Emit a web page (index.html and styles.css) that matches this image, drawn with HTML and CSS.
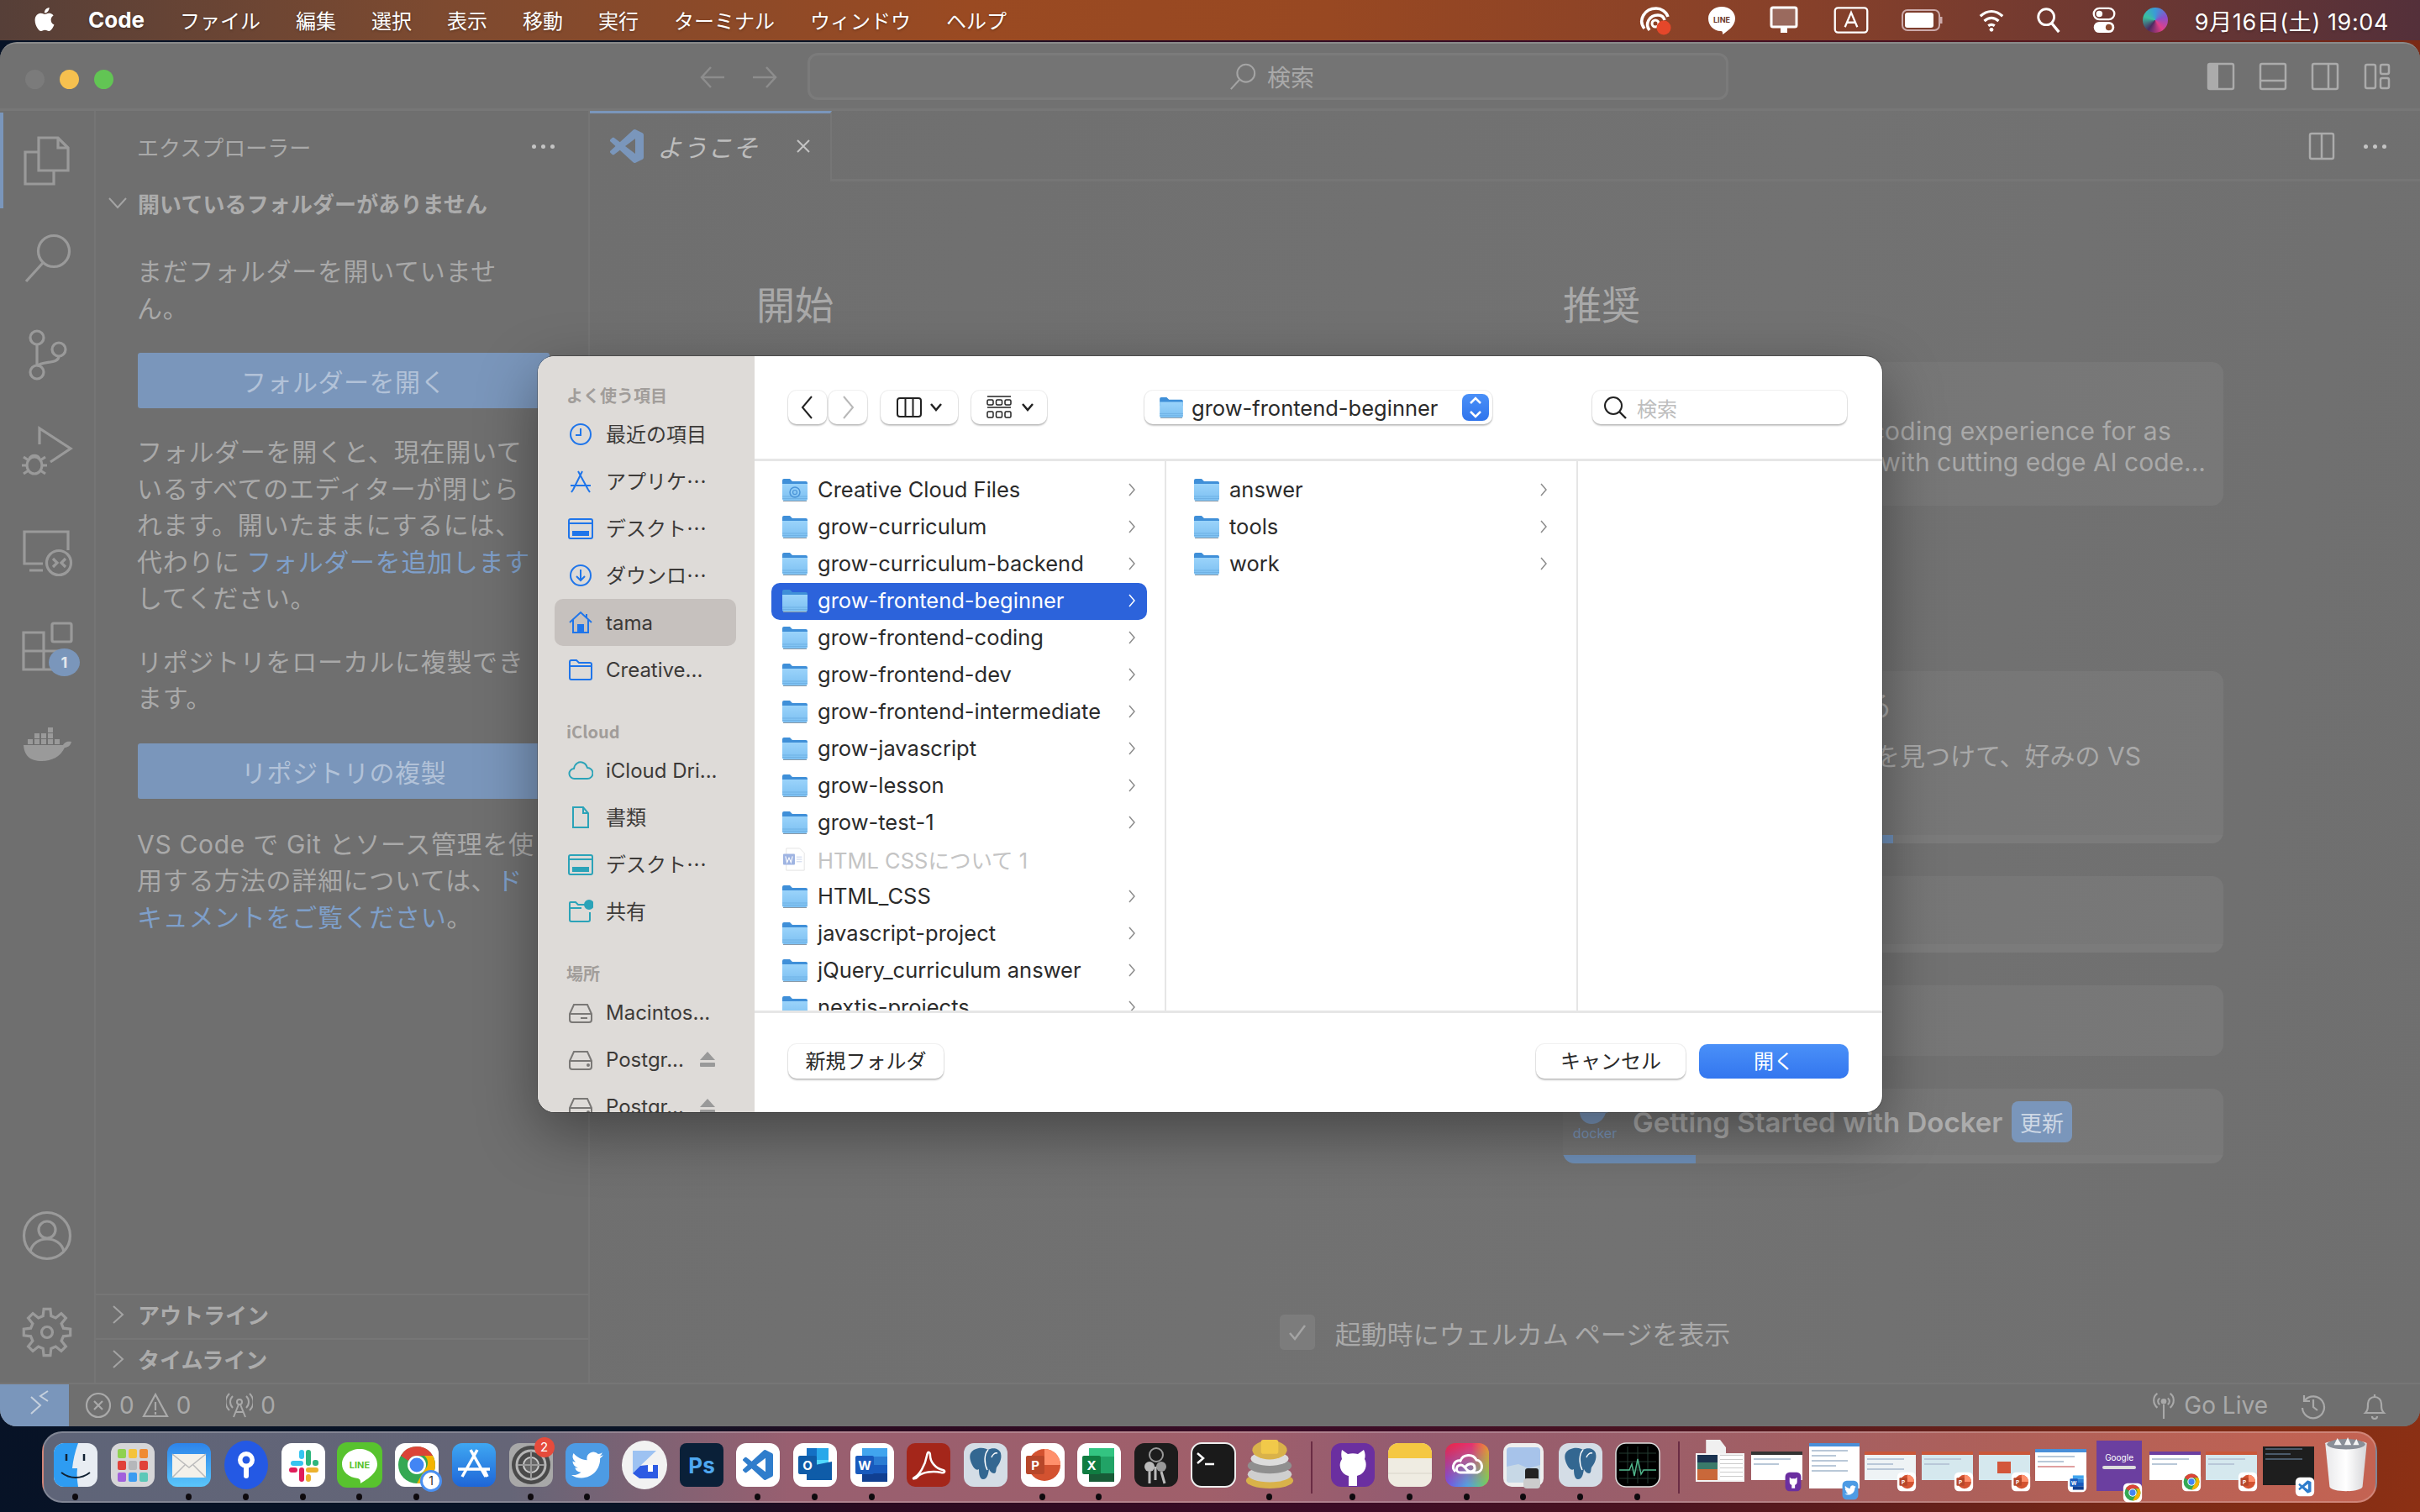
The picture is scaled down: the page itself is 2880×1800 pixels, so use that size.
FILE: index.html
```html
<!DOCTYPE html>
<html lang="ja">
<head>
<meta charset="utf-8">
<title>Code</title>
<link rel="stylesheet" href="styles.css">
</head>
<body>
<svg class="sprite" width="0" height="0">
  <defs>
    <linearGradient id="fold" x1="0" y1="0" x2="0" y2="1"><stop offset="0" stop-color="#9ad3fa"/><stop offset="1" stop-color="#7cc0f2"/></linearGradient>
    <symbol id="folder" viewBox="0 0 30 28">
      <path d="M0 3a2 2 0 0 1 2-2h7l3 3h16a2 2 0 0 1 2 2v6H0z" fill="#3f8fd8"/>
      <path d="M0 7h30v18a2 2 0 0 1-2 2H2a2 2 0 0 1-2-2z" fill="url(#fold)"/>
      <path d="M0 22h30M0 24.500h30" stroke="#6fb1e4" stroke-width="1"/>
      <path d="M1 27.500h28" stroke="#8a9aa8" stroke-width="1"/>
    </symbol>
    <symbol id="chev" viewBox="0 0 10 18"><path d="M2 2l6 7-6 7" fill="none" stroke="currentColor" stroke-width="1.500"/></symbol>
    <symbol id="vsc" viewBox="0 0 24 24"><path d="M23.15 2.587L18.21.21a1.494 1.494 0 0 0-1.705.29l-9.46 8.63-4.12-3.128a.999.999 0 0 0-1.276.057L.327 7.261A1 1 0 0 0 .326 8.74L3.899 12 .326 15.26a1 1 0 0 0 .001 1.479L1.65 17.94a.999.999 0 0 0 1.276.057l4.12-3.128 9.46 8.63a1.492 1.492 0 0 0 1.704.29l4.942-2.377A1.5 1.5 0 0 0 24 20.06V3.939a1.5 1.5 0 0 0-.85-1.352zm-5.146 14.861L10.826 12l7.178-5.448v10.896z" fill="currentColor"/></symbol>
    <symbol id="twbird" viewBox="0 0 24 24"><path d="M23.95 4.57a10 10 0 0 1-2.82.77 4.96 4.96 0 0 0 2.16-2.72c-.95.55-2 .96-3.12 1.19a4.92 4.92 0 0 0-8.38 4.48C7.69 8.1 4.07 6.13 1.64 3.16a4.92 4.92 0 0 0 1.52 6.57 4.9 4.9 0 0 1-2.23-.61v.06a4.92 4.92 0 0 0 3.95 4.83 4.9 4.9 0 0 1-2.21.08 4.93 4.93 0 0 0 4.6 3.42A9.87 9.87 0 0 1 0 19.54a13.94 13.94 0 0 0 7.55 2.21c9.06 0 14-7.5 14-13.98 0-.21 0-.42-.01-.63a10 10 0 0 0 2.41-2.57z" fill="#fff"/></symbol>
    <symbol id="d-vscode" viewBox="0 0 56 56"><rect x="2" y="2" width="52" height="52" rx="12" fill="#fff"/><use href="#vsc" x="10" y="10" width="36" height="36" color="#2f7dcc"/></symbol>
    <symbol id="d-chrome" viewBox="0 0 56 56"><rect x="2" y="2" width="52" height="52" rx="12" fill="#fff"/><circle cx="28" cy="28" r="22" fill="#34a853"/><path d="M28 6a22 22 0 0 1 19 11H28a11 11 0 0 0-10 6L9 17A22 22 0 0 1 28 6z" fill="#db4437"/><path d="M47 17a22 22 0 0 1-19 33l9-16a11 11 0 0 0 0-17z" fill="#f4b400"/><circle cx="28" cy="28" r="11" fill="#fff"/><circle cx="28" cy="28" r="8.500" fill="#4285f4"/></symbol>
    <symbol id="d-ppt" viewBox="0 0 56 56"><rect x="2" y="2" width="52" height="52" rx="12" fill="#fff"/><circle cx="30" cy="28" r="19" fill="#d35230"/><path d="M30 9a19 19 0 0 1 19 19H30z" fill="#ff8f6b"/><rect x="8" y="17" width="22" height="22" rx="2" fill="#b7472a"/><text x="19" y="34" class="tile">P</text></symbol>
    <symbol id="d-word" viewBox="0 0 56 56"><rect x="2" y="2" width="52" height="52" rx="12" fill="#fff"/><rect x="16" y="8" width="30" height="10" fill="#41a5ee"/><rect x="16" y="18" width="30" height="10" fill="#2b7cd3"/><rect x="16" y="28" width="30" height="10" fill="#185abd"/><rect x="16" y="38" width="30" height="10" fill="#103f91"/><rect x="8" y="17" width="22" height="22" rx="2" fill="#185abd"/><text x="19" y="34" class="tile">W</text></symbol>
    <symbol id="d-pg" viewBox="0 0 56 56"><rect x="2" y="2" width="52" height="52" rx="12" fill="#d4dde6"/><path d="M14 10c8-4 14-2 17 0 5-3 13-2 15 4 2 8-3 14-5 17-1 3 0 7-3 7s-5-3-6-5c-1 6-2 12-7 12-4 0-5-6-5-12-3 2-6-1-8-5-3-6-5-14 2-18z" fill="#336791"/><path d="M31 10c-5 5-5 16-1 24" fill="none" stroke="#fff" stroke-width="1.500"/><path d="M42 14c-3-1-6 2-7 5" fill="none" stroke="#fff" stroke-width="1.500"/></symbol>
  </defs>
</svg>

<header class="menubar">
  <svg class="apple" viewBox="0 0 24 24"><path fill="#fff" d="M12.152 6.896c-.948 0-2.415-1.078-3.96-1.04-2.04.027-3.91 1.183-4.961 3.014-2.117 3.675-.546 9.103 1.519 12.09 1.013 1.454 2.208 3.09 3.792 3.039 1.52-.065 2.09-.987 3.935-.987 1.831 0 2.35.987 3.96.948 1.637-.026 2.676-1.48 3.676-2.948 1.156-1.688 1.636-3.325 1.662-3.415-.039-.013-3.182-1.221-3.22-4.857-.026-3.04 2.48-4.494 2.597-4.559-1.429-2.09-3.623-2.324-4.39-2.376-2-.156-3.675 1.09-4.61 1.09zM15.53 3.83c.843-1.012 1.4-2.427 1.245-3.83-1.207.052-2.662.805-3.532 1.818-.78.896-1.454 2.338-1.273 3.714 1.338.104 2.715-.688 3.559-1.701"/></svg>
  <nav class="menus">
    <span class="appname">Code</span><span>ファイル</span><span>編集</span><span>選択</span><span>表示</span><span>移動</span><span>実行</span><span>ターミナル</span><span>ウィンドウ</span><span>ヘルプ</span>
  </nav>
  <div class="tray">
    <svg class="t t1" viewBox="0 0 42 36"><path d="M8 28C0 18 8 4 22 4c6 0 12 4 14 10" fill="none" stroke="#fff" stroke-width="3.500"/><path d="M14 30c-6-8 0-18 10-18 4 0 7 2 8 6" fill="none" stroke="#fff" stroke-width="3.500"/><circle cx="21" cy="22" r="4" fill="none" stroke="#fff" stroke-width="3"/><circle cx="31" cy="27" r="8.500" fill="#e5472a"/></svg>
    <svg class="t t2" viewBox="0 0 36 36"><path d="M18 2c9 0 16 6 16 14 0 9-9 15-15 19 0-3 0-4-2-4C8 31 2 24 2 16 2 8 9 2 18 2z" fill="#fff"/><text x="18" y="21" class="lineword">LINE</text></svg>
    <svg class="t t3" viewBox="0 0 36 36"><rect x="3" y="3" width="30" height="23" rx="2" fill="#9a6a5e" stroke="#fff" stroke-width="3"/><rect x="14" y="26" width="8" height="7" fill="#fff"/></svg>
    <svg class="t t4" viewBox="0 0 48 36"><rect x="3" y="2" width="42" height="32" rx="4" fill="none" stroke="#fff" stroke-width="2.500"/><path d="M16 27l8-19 8 19M19 21h10" fill="none" stroke="#fff" stroke-width="2.500"/></svg>
    <svg class="t t5" viewBox="0 0 52 36"><rect x="2" y="6" width="44" height="24" rx="6" fill="none" stroke="#caa" stroke-width="2"/><rect x="5" y="9" width="34" height="18" rx="3" fill="#fff"/><path d="M48 14v8" stroke="#caa" stroke-width="3"/></svg>
    <svg class="t t6" viewBox="0 0 36 36"><path d="M4 13c9-8 19-8 28 0M9 19c6-5 12-5 18 0M14 25c3-2 5-2 8 0" fill="none" stroke="#fff" stroke-width="3.500"/><circle cx="18" cy="30" r="2.500" fill="#fff"/></svg>
    <svg class="t t7" viewBox="0 0 36 36"><circle cx="15" cy="14" r="10" fill="none" stroke="#fff" stroke-width="3"/><path d="M22 22l9 11" stroke="#fff" stroke-width="3.500"/></svg>
    <svg class="t t8" viewBox="0 0 36 36"><rect x="5" y="3" width="26" height="14" rx="7" fill="none" stroke="#fff" stroke-width="2.500"/><circle cx="12" cy="10" r="4" fill="#fff"/><rect x="5" y="20" width="26" height="14" rx="7" fill="#fff"/><circle cx="24" cy="27" r="4" fill="#8a4a30"/></svg>
    <span class="t siri"></span>
    <span class="clock">9月16日(土) 19:04</span>
  </div>
</header>

<section class="window">
  <div class="titlebar">
    <div class="lights"><i class="l off"></i><i class="l yel"></i><i class="l grn"></i></div>
    <div class="arrows">
      <svg viewBox="0 0 32 32"><path d="M30 16H3M14 4L3 16l11 12" fill="none" stroke="#8d8d8d" stroke-width="2.500"/></svg>
      <svg viewBox="0 0 32 32"><path d="M2 16h27M18 4l11 12-11 12" fill="none" stroke="#8d8d8d" stroke-width="2.500"/></svg>
    </div>
    <div class="cmd">
      <svg viewBox="0 0 36 36"><circle cx="22" cy="14" r="11" fill="none" stroke="#a4a4a4" stroke-width="2.200"/><path d="M14 22L3 34" stroke="#a4a4a4" stroke-width="2.200"/></svg>
      <span>検索</span>
    </div>
    <div class="layouts">
      <svg viewBox="0 0 34 34"><rect x="2" y="2" width="30" height="30" rx="2" fill="none" stroke="#ababab" stroke-width="2.500"/><rect x="2" y="2" width="12" height="30" fill="#ababab"/></svg>
      <svg viewBox="0 0 34 34"><rect x="2" y="2" width="30" height="30" rx="2" fill="none" stroke="#ababab" stroke-width="2.500"/><path d="M2 22h30" stroke="#ababab" stroke-width="2.500"/></svg>
      <svg viewBox="0 0 34 34"><rect x="2" y="2" width="30" height="30" rx="2" fill="none" stroke="#ababab" stroke-width="2.500"/><path d="M21 2v30" stroke="#ababab" stroke-width="2.500"/></svg>
      <svg viewBox="0 0 34 34"><rect x="3" y="3" width="12" height="28" rx="2" fill="none" stroke="#ababab" stroke-width="2.500"/><rect x="21" y="3" width="10" height="11" rx="2" fill="none" stroke="#ababab" stroke-width="2.500"/><rect x="21" y="19" width="10" height="12" rx="2" fill="none" stroke="#ababab" stroke-width="2.500"/></svg>
    </div>
  </div>

  <div class="main">
    <aside class="activity">
      <div class="act act-on"><svg viewBox="0 0 70 70" class="ai"><path d="M25 46V7h23l12 12v27zM48 7v12h12"/><path d="M25 24H9v38h34V46"/></svg></div>
      <div class="act"><svg viewBox="0 0 70 70" class="ai"><circle cx="43" cy="27" r="18.500"/><path d="M30 41L10 63"/></svg></div>
      <div class="act"><svg viewBox="0 0 70 70" class="ai"><circle cx="23" cy="15" r="8"/><circle cx="49" cy="29" r="8"/><circle cx="23" cy="56" r="8"/><path d="M23 23v25M49 37c0 10-20 5-26 12"/></svg></div>
      <div class="act"><svg viewBox="0 0 70 70" class="ai"><path d="M26 27V8l37 24-24 16"/><ellipse cx="20" cy="52" rx="9" ry="10"/><path d="M7 42l6 4M7 62l6-4M33 42l-6 4M33 62l-6-4M5 52h6M29 52h6M14 44c2-5 10-5 12 0"/></svg></div>
      <div class="act"><svg viewBox="0 0 70 70" class="ai"><path d="M30 54H8V16h52v22M14 62h16"/><circle cx="49" cy="53" r="14.500"/><path d="M42 48l5 5-5 5M57 48l-5 5 5 5"/></svg></div>
      <div class="act"><svg viewBox="0 0 70 70" class="ai"><rect x="41" y="10" width="23" height="22" rx="2"/><path d="M7 21h24v44H7zM7 43h42v22H31"/></svg><b class="badge">1</b></div>
      <div class="act"><svg viewBox="0 0 70 70" class="af"><path d="M7 40h47c2-3 4-5 10-4-1 5-5 7-8 7-5 11-16 16-27 16C14 59 8 52 7 40z"/><path d="M12 33h6v6h-6zM20 33h6v6h-6zM28 33h6v6h-6zM36 33h6v6h-6zM20 26h6v6h-6zM28 26h6v6h-6zM36 26h6v6h-6zM36 19h6v6h-6zM44 33h6v6h-6z"/></svg></div>
      <div class="act-bottom">
        <div class="act"><svg viewBox="0 0 70 70" class="ai"><circle cx="35" cy="35" r="27.500"/><circle cx="35" cy="28" r="10"/><path d="M15 54c4-20 36-20 40 0"/></svg></div>
        <div class="act"><svg viewBox="0 0 70 70" class="ai"><circle cx="35" cy="35" r="6.500"/><path d="M30.200 15.600L31.100 7.300H38.900L39.800 15.600L45.300 17.900L51.900 12.600L57.400 18.100L52.100 24.700L54.400 30.200L62.700 31.100V38.900L54.400 39.800L52.100 45.300L57.400 51.900L51.900 57.400L45.300 52.100L39.800 54.400L38.900 62.700H31.100L30.200 54.400L24.700 52.100L18.100 57.400L12.600 51.900L17.900 45.300L15.600 39.800L7.300 38.900V31.100L15.600 30.200L17.900 24.700L12.600 18.100L18.100 12.600L24.700 17.900z"/></svg></div>
      </div>
    </aside>

    <aside class="side">
      <div class="side-head"><span>エクスプローラー</span><span class="dots"><i></i><i></i><i></i></span></div>
      <div class="pane-head"><svg class="tw" viewBox="0 0 24 24"><path d="M2 7l10 11L22 7"/></svg><span>開いているフォルダーがありません</span></div>
      <div class="side-body">
        <p>まだフォルダーを開いていませ<br>ん。</p>
        <button class="vbtn">フォルダーを開く</button>
        <p>フォルダーを開くと、現在開いて<br>いるすべてのエディターが閉じら<br>れます。開いたままにするには、<br>代わりに <a>フォルダーを追加します</a><br>してください。</p>
        <p class="gap2">リポジトリをローカルに複製でき<br>ます。</p>
        <button class="vbtn">リポジトリの複製</button>
        <p class="gap3">VS Code で Git とソース管理を使<br>用する方法の詳細については、<a>ド</a><br><a>キュメントをご覧ください</a>。</p>
      </div>
      <div class="pane-foot"><svg class="tw" viewBox="0 0 24 24"><path d="M7 2l11 10L7 22"/></svg><span>アウトライン</span></div>
      <div class="pane-foot"><svg class="tw" viewBox="0 0 24 24"><path d="M7 2l11 10L7 22"/></svg><span>タイムライン</span></div>
    </aside>

    <main class="editor">
      <div class="tabs">
        <div class="tab">
          <svg class="tabicon" viewBox="0 0 24 24"><use href="#vsc" color="#7a96bb"/></svg>
          <span class="tabname">ようこそ</span>
          <svg class="tabx" viewBox="0 0 20 20"><path d="M3 3l14 14M17 3L3 17" stroke="#c4c4c4" stroke-width="2"/></svg>
        </div>
        <div class="tabfill">
          <svg viewBox="0 0 34 34"><rect x="3" y="2" width="28" height="30" rx="2" fill="none" stroke="#ababab" stroke-width="2.500"/><path d="M17 2v30" stroke="#ababab" stroke-width="2.500"/></svg>
          <span class="dots"><i></i><i></i><i></i></span>
        </div>
      </div>
      <div class="welcome">
        <div class="wleft"><h2>開始</h2></div>
        <div class="wright">
          <h2>推奨</h2>
          <div class="card c1">
            <div class="rline r62">Supercharge your coding experience for as</div>
            <div class="rline r21">little as $10/month with cutting edge AI code...</div>
          </div>
          <div class="card c2">
            <div class="c2body">
              <div class="rline r394 ctitle">好みの外観を見つける</div>
              <div class="rline r98">お気に入りのテーマを見つけて、好みの VS</div>
              <div class="rline r392">Code にしましょう。</div>
            </div>
            <div class="prog"><div class="progv" style="width:50%"></div></div>
          </div>
          <div class="card c3"><div class="c2body"></div><div class="prog"></div></div>
          <div class="card c4"></div>
          <div class="card c5">
            <div class="c5body">
              <div class="dk">
                <svg viewBox="0 0 48 28"><path d="M4 10h32c2-3 4-4 8-3-1 4-4 5-6 5-3 9-10 14-18 14C11 26 5 20 4 10z" fill="#7a96bb"/></svg>
                <span>docker</span>
              </div>
              <span class="dtitle">Getting Started with Docker</span>
              <span class="upd">更新</span>
            </div>
            <div class="prog"><div class="progv" style="width:20.100%"></div></div>
          </div>
        </div>
      </div>
      <div class="showstart">
        <span class="cb"><svg viewBox="0 0 28 28"><path d="M5 15l6 7L23 6" fill="none" stroke="#a4a4a4" stroke-width="2.500"/></svg></span>
        <span>起動時にウェルカム ページを表示</span>
      </div>
    </main>
  </div>

  <footer class="status">
    <div class="remote"><svg viewBox="0 0 28 36"><path d="M3 8l11 10L3 28M23 1l-9 6 9 6" fill="none" stroke="#c5d0dd" stroke-width="2"/></svg></div>
    <div class="st-left">
      <svg class="s-err" viewBox="0 0 32 32"><circle cx="16" cy="16" r="14" fill="none" stroke="#a9a9a9" stroke-width="2.200"/><path d="M11 11l10 10M21 11L11 21" stroke="#a9a9a9" stroke-width="2.200"/></svg><span>0</span>
      <svg class="s-warn" viewBox="0 0 32 32"><path d="M16 3L30 29H2z" fill="none" stroke="#a9a9a9" stroke-width="2.200"/><path d="M16 12v10M16 24v3" stroke="#a9a9a9" stroke-width="2.200"/></svg><span>0</span>
      <svg class="s-radio" viewBox="0 0 32 32"><circle cx="16" cy="12" r="3" fill="none" stroke="#a9a9a9" stroke-width="2"/><path d="M15 15L9 30M17 15l6 15M11 24h10M8 5c-4 4-4 10 0 14M24 5c4 4 4 10 0 14M4 2c-6 6-6 14 0 20M28 2c6 6 6 14 0 20" fill="none" stroke="#a9a9a9" stroke-width="2"/></svg><span>0</span>
    </div>
    <div class="st-right">
      <svg class="s-live" viewBox="0 0 32 36"><circle cx="16" cy="13" r="3.500" fill="#a9a9a9"/><path d="M8 21c-6-5-6-14 0-18M24 21c6-5 6-14 0-18M11 17c-3-2-3-6 0-8M21 17c3-2 3-6 0-8M16 17v18" fill="none" stroke="#a9a9a9" stroke-width="2.200"/></svg>
      <span class="golive">Go Live</span>
      <svg class="s-hist" viewBox="0 0 32 32"><path d="M5 4v7h7M6 10a13 13 0 1 1-3 9" fill="none" stroke="#a9a9a9" stroke-width="2.200"/><path d="M16 9v9l5 4" fill="none" stroke="#a9a9a9" stroke-width="2.200"/></svg>
      <svg class="s-bell" viewBox="0 0 32 32"><path d="M5 25c3-3 3-6 3-11a8 8 0 0 1 16 0c0 5 0 8 3 11zM13 29a3 3 0 0 0 6 0M16 3v3" fill="none" stroke="#a9a9a9" stroke-width="2.200"/></svg>
    </div>
  </footer>
</section>

<div class="dock">
  <div class="slot run"><svg class="ic" viewBox="0 0 56 56"><rect x="2" y="2" width="52" height="52" rx="12" fill="#e8edf3"/><path d="M14 2h17c-4 11-6 20-7 30h6c-1 8 0 15 1 22H14A12 12 0 0 1 2 42V14A12 12 0 0 1 14 2z" fill="#2e9cf2"/><path d="M17 15v8M38 15v8" stroke="#123" stroke-width="2.500"/><path d="M11 37c10 8 24 8 34 0" fill="none" stroke="#123" stroke-width="2"/></svg></div>
  <div class="slot"><svg class="ic" viewBox="0 0 56 56"><rect x="2" y="2" width="52" height="52" rx="12" fill="#d6d6d8"/><rect x="10" y="9" width="10" height="11" rx="2" fill="#8fd14f"/><rect x="23" y="9" width="10" height="11" rx="2" fill="#f5c33b"/><rect x="36" y="9" width="10" height="11" rx="2" fill="#f08b32"/><rect x="10" y="23" width="10" height="11" rx="2" fill="#e0423a"/><rect x="23" y="23" width="10" height="11" rx="2" fill="#b5b7ba"/><rect x="36" y="23" width="10" height="11" rx="2" fill="#e0423a"/><rect x="10" y="37" width="10" height="11" rx="2" fill="#a160dc"/><rect x="23" y="37" width="10" height="11" rx="2" fill="#3c9cf0"/><rect x="36" y="37" width="10" height="11" rx="2" fill="#5cc8b8"/></svg></div>
  <div class="slot run"><svg class="ic" viewBox="0 0 56 56"><defs><linearGradient id="mg" x1="0" y1="0" x2="0" y2="1"><stop offset="0" stop-color="#2d84ea"/><stop offset="1" stop-color="#5ac6fb"/></linearGradient></defs><rect x="2" y="2" width="52" height="52" rx="12" fill="url(#mg)"/><rect x="8" y="15" width="40" height="28" rx="2" fill="#f4f1ea"/><path d="M8 15l20 16 20-16M8 43l15-15M48 43L33 28" fill="none" stroke="#bbb" stroke-width="1.500"/></svg></div>
  <div class="slot run"><svg class="ic tall" viewBox="0 0 56 60"><ellipse cx="28" cy="30" rx="26" ry="29" fill="#2459e4"/><circle cx="28" cy="24" r="10" fill="#fff"/><circle cx="28" cy="24" r="4.500" fill="#2459e4"/><rect x="25" y="30" width="6" height="16" rx="3" fill="#fff"/></svg></div>
  <div class="slot run"><svg class="ic" viewBox="0 0 56 56"><rect x="2" y="2" width="52" height="52" rx="12" fill="#fff"/><rect x="14" y="23" width="15" height="6" rx="3" fill="#36c5f0" transform="translate(-1 0)"/><rect x="23" y="10" width="6" height="11" rx="3" fill="#36c5f0"/><rect x="31" y="10" width="6" height="19" rx="3" fill="#2eb67d"/><rect x="39" y="22" width="7" height="7" rx="3" fill="#2eb67d"/><rect x="31" y="31" width="15" height="6" rx="3" fill="#ecb22e"/><rect x="31" y="39" width="6" height="9" rx="3" fill="#ecb22e"/><rect x="23" y="31" width="6" height="17" rx="3" fill="#e01e5a"/><rect x="11" y="31" width="10" height="6" rx="3" fill="#e01e5a"/></svg></div>
  <div class="slot run"><svg class="ic" viewBox="0 0 56 56"><rect x="1" y="1" width="54" height="54" rx="12" fill="#58c32e"/><path d="M28 9c12 0 21 8 21 18 0 11-12 18-20 23 0-3 0-5-3-6C15 43 7 36 7 27 7 17 16 9 28 9z" fill="#fff"/><text x="28" y="32" class="linegreen">LINE</text></svg></div>
  <div class="slot run"><svg class="ic" viewBox="0 0 56 56"><use href="#d-chrome"/></svg><b class="dot-badge">1</b></div>
  <div class="slot"><svg class="ic" viewBox="0 0 56 56"><defs><linearGradient id="as" x1="0" y1="0" x2="0" y2="1"><stop offset="0" stop-color="#3fa7f2"/><stop offset="1" stop-color="#1e66d8"/></linearGradient></defs><rect x="2" y="2" width="52" height="52" rx="12" fill="url(#as)"/><path d="M24 10l18 32M32 10L14 42M9 33h38M40 33l4 9" fill="none" stroke="#fff" stroke-width="3.500"/></svg></div>
  <div class="slot run"><svg class="ic" viewBox="0 0 56 56"><rect x="2" y="2" width="52" height="52" rx="12" fill="#a8a8a8"/><circle cx="28" cy="28" r="23" fill="#4a4a4a"/><circle cx="28" cy="28" r="17" fill="none" stroke="#b5b5b5" stroke-width="3"/><circle cx="28" cy="28" r="9" fill="#666" stroke="#ccc" stroke-width="2"/><path d="M28 11v34M12 28h32" stroke="#999" stroke-width="2"/></svg><b class="red-badge">2</b></div>
  <div class="slot run"><svg class="ic" viewBox="0 0 56 56"><rect x="2" y="2" width="52" height="52" rx="12" fill="#4d9be4"/><use href="#twbird" x="9" y="9" width="38" height="38"/></svg></div>
  <div class="slot"><svg class="ic tall" viewBox="0 0 56 60"><ellipse cx="28" cy="30" rx="27" ry="29" fill="#f2f2f2"/><path d="M14 13h28L23 31l-9 9z" fill="#9dc2f2"/><path d="M14 40l9-9 9-1h12v16H22z" fill="#2d5be3"/><path d="M32 30h6v8h-6z" fill="#fff"/></svg></div>
  <div class="slot"><svg class="ic" viewBox="0 0 56 56"><rect x="2" y="2" width="52" height="52" rx="8" fill="#0a2038"/><text x="28" y="38" class="pstext">Ps</text></svg></div>
  <div class="slot run"><svg class="ic" viewBox="0 0 56 56"><use href="#d-vscode"/></svg></div>
  <div class="slot run"><svg class="ic" viewBox="0 0 56 56"><rect x="2" y="2" width="52" height="52" rx="12" fill="#fff"/><rect x="18" y="8" width="24" height="36" fill="#1470c4"/><rect x="30" y="8" width="14" height="14" fill="#28a8ea"/><rect x="30" y="22" width="14" height="12" fill="#50d9ff"/><path d="M18 30l30-6v22H18z" fill="#0f5ca8"/><rect x="8" y="17" width="22" height="22" rx="2" fill="#0f5ca8"/><text x="19" y="34" class="tile">O</text></svg></div>
  <div class="slot run"><svg class="ic" viewBox="0 0 56 56"><use href="#d-word"/></svg></div>
  <div class="slot"><svg class="ic" viewBox="0 0 56 56"><rect x="2" y="2" width="52" height="52" rx="10" fill="#a4261a"/><path d="M11 43c6-3 13-14 15-26 1-6 4-5 4 0 0 7 6 15 15 17 4 1 2 4-2 3-9-2-23-1-28 5-3 3-7 3-4 1z" fill="none" stroke="#fff" stroke-width="2.500"/></svg></div>
  <div class="slot"><svg class="ic" viewBox="0 0 56 56"><use href="#d-pg"/></svg></div>
  <div class="slot run"><svg class="ic" viewBox="0 0 56 56"><use href="#d-ppt"/></svg></div>
  <div class="slot run"><svg class="ic" viewBox="0 0 56 56"><rect x="2" y="2" width="52" height="52" rx="12" fill="#fff"/><rect x="16" y="8" width="30" height="20" fill="#33c481"/><rect x="16" y="28" width="30" height="20" fill="#185c37"/><rect x="30" y="18" width="16" height="20" fill="#21a366"/><rect x="8" y="17" width="22" height="22" rx="2" fill="#107c41"/><text x="19" y="34" class="tile">X</text></svg></div>
  <div class="slot"><svg class="ic" viewBox="0 0 56 56"><rect x="2" y="2" width="52" height="52" rx="12" fill="#1c1c1c"/><circle cx="28" cy="16" r="8" fill="none" stroke="#999" stroke-width="2"/><circle cx="20" cy="30" r="6" fill="#bbb"/><circle cx="34" cy="30" r="6" fill="#999"/><path d="M20 36v14M34 36l4 14M27 30v16" stroke="#bbb" stroke-width="3"/></svg></div>
  <div class="slot"><svg class="ic" viewBox="0 0 56 56"><rect x="2" y="2" width="52" height="52" rx="12" fill="#1a1a1a" stroke="#eee" stroke-width="2"/><path d="M9 14l7 6-7 6M18 27h11" fill="none" stroke="#fff" stroke-width="2.500"/></svg></div>
  <div class="slot run"><svg class="ic xtall" viewBox="0 0 64 66"><ellipse cx="32" cy="54" rx="30" ry="10" fill="#d9b24a"/><ellipse cx="32" cy="46" rx="28" ry="10" fill="#cfcfcf"/><ellipse cx="32" cy="35" rx="28" ry="10" fill="#8f8f8f"/><ellipse cx="32" cy="26" rx="24" ry="9" fill="#dcdcdc"/><ellipse cx="32" cy="15" rx="22" ry="12" fill="#d9b24a"/><rect x="21" y="2" width="22" height="18" rx="3" fill="#f1c94a"/></svg></div>
  <div class="dsep"><i></i></div>
  <div class="slot run"><svg class="ic" viewBox="0 0 56 56"><rect x="2" y="2" width="52" height="52" rx="12" fill="#6b2fa0"/><path d="M15 10l7 5c4-1 8-1 12 0l7-5c2 4 2 8 1 11 3 5 2 13-3 17-2 2-5 2-6 3v12H23V41c-5-1-9-5-10-10-1-4 0-7 2-10-1-4-1-7 0-11z" fill="#fff"/></svg></div>
  <div class="slot run"><svg class="ic" viewBox="0 0 56 56"><rect x="2" y="2" width="52" height="52" rx="12" fill="#efece2"/><path d="M2 20V14A12 12 0 0 1 14 2h28a12 12 0 0 1 12 12v6z" fill="#f5c842"/><path d="M2 38h52" stroke="#d8d4c8" stroke-width="1"/></svg></div>
  <div class="slot run"><svg class="ic" viewBox="0 0 56 56"><defs><linearGradient id="ccg" x1="0" y1="0" x2="1" y2="0"><stop offset="0" stop-color="#f0243c"/><stop offset=".6" stop-color="#ee2a6a"/><stop offset="1" stop-color="#f89030"/></linearGradient><linearGradient id="ccb" x1="0" y1="0" x2="1" y2="0"><stop offset="0" stop-color="#6a52f0"/><stop offset=".5" stop-color="#4aa8e8"/><stop offset="1" stop-color="#68d858"/></linearGradient><linearGradient id="ccf" x1="0" y1="0" x2="0" y2="1"><stop offset="0" stop-color="#fff" stop-opacity="0"/><stop offset="1" stop-color="#fff"/></linearGradient><mask id="ccm"><rect x="0" y="0" width="56" height="56" fill="url(#ccf)"/></mask></defs><rect x="2" y="2" width="52" height="52" rx="12" fill="url(#ccg)"/><rect x="2" y="2" width="52" height="52" rx="12" fill="url(#ccb)" mask="url(#ccm)"/><path d="M14 36c-6-6 0-15 6-13 3-8 15-9 19-1 8 1 9 13 1 15H20c-6 0-6-8 0-9 3-1 5 3 8 6 4 4 10 1 9-3 0-5-7-6-11-1" fill="none" stroke="#fff" stroke-width="3"/></svg></div>
  <div class="slot run"><svg class="ic" viewBox="0 0 56 56"><rect x="4" y="2" width="48" height="52" rx="10" fill="#eee"/><rect x="8" y="7" width="40" height="42" rx="4" fill="#a7c3ea"/><path d="M8 30l14-3 12 5 14-4v17a4 4 0 0 1-4 4H12a4 4 0 0 1-4-4z" fill="#c7d8e6"/><rect x="30" y="32" width="16" height="22" rx="3" fill="#222"/><rect x="28" y="44" width="20" height="12" rx="4" fill="#ccc"/></svg></div>
  <div class="slot run"><svg class="ic" viewBox="0 0 56 56"><use href="#d-pg"/></svg></div>
  <div class="slot run"><svg class="ic" viewBox="0 0 56 56"><rect x="2" y="2" width="52" height="52" rx="12" fill="#000" stroke="#ddd" stroke-width="1.500"/><path d="M6 14h44M6 24h44M6 34h44M6 44h44M16 6v44M28 6v44M40 6v44" stroke="#223a30" stroke-width="1"/><path d="M6 34h12l3-7 3 14 4-20 4 18 3-5h15" fill="none" stroke="#4fb58a" stroke-width="1.500"/></svg></div>
  <div class="dsep"><i></i></div>
  <div class="slot stk">
    <div class="thumb th-doc"><i class="doc-top"></i><div class="doc-body"><i class="dc1"></i><i class="dc2"></i></div></div>
  </div>
  <div class="slot stk"><div class="thumb th-a"><i class="bar-dk"></i><i class="ln"></i><i class="ln s"></i><svg class="mini" viewBox="0 0 56 56"><rect x="6" y="2" width="44" height="52" rx="12" fill="#6b2fa0"/><path d="M18 16l6 4c3-1 6-1 9 0l6-4v12c0 6-4 8-6 9v9h-9v-9c-3-1-6-3-6-9z" fill="#fff"/></svg></div></div>
  <div class="slot stk"><div class="thumb th-b"><i class="bar-bl"></i><i class="ln"></i><i class="ln s"></i><i class="ln"></i><i class="ln s"></i><i class="ln"></i><svg class="mini" viewBox="0 0 56 56"><rect x="6" y="2" width="44" height="52" rx="12" fill="#4d9be4"/><use href="#twbird" x="12" y="12" width="32" height="32"/></svg></div></div>
  <div class="slot stk"><div class="thumb th-p"><i class="bar-or"></i><i class="ln"></i><i class="ln s"></i><i class="ln"></i><svg class="mini" viewBox="0 0 56 56"><use href="#d-ppt"/></svg></div></div>
  <div class="slot stk"><div class="thumb th-p blue"><i class="bar-or"></i><i class="ln"></i><i class="ln s"></i><svg class="mini" viewBox="0 0 56 56"><use href="#d-ppt"/></svg></div></div>
  <div class="slot stk"><div class="thumb th-p blue"><i class="bar-or"></i><i class="spot"></i><svg class="mini" viewBox="0 0 56 56"><use href="#d-ppt"/></svg></div></div>
  <div class="slot stk"><div class="thumb th-w"><i class="bar-bl"></i><i class="ln"></i><i class="ln s"></i><i class="ln red"></i><svg class="mini" viewBox="0 0 56 56"><use href="#d-word"/></svg></div></div>
  <div class="slot stk"><div class="thumb th-g"><span>Google</span><i class="srch"></i><svg class="mini" viewBox="0 0 56 56"><use href="#d-chrome"/></svg></div></div>
  <div class="slot stk"><div class="thumb th-a"><i class="bar-pu"></i><i class="ln"></i><i class="ln s"></i><svg class="mini" viewBox="0 0 56 56"><use href="#d-chrome"/></svg></div></div>
  <div class="slot stk"><div class="thumb th-p blue"><i class="bar-or"></i><i class="ln"></i><i class="ln s"></i><svg class="mini" viewBox="0 0 56 56"><use href="#d-ppt"/></svg></div></div>
  <div class="slot stk"><div class="thumb th-d"><i class="ln"></i><i class="ln s"></i><i class="ln"></i><svg class="mini" viewBox="0 0 56 56"><use href="#d-vscode"/></svg></div></div>
  <div class="slot"><svg class="ic xtall" viewBox="0 0 56 64"><defs><linearGradient id="tr" x1="0" y1="0" x2="1" y2="0"><stop offset="0" stop-color="#e8e8ea"/><stop offset=".5" stop-color="#fff"/><stop offset="1" stop-color="#d5d5d8"/></linearGradient></defs><path d="M4 8c0-4 48-4 48 0l-5 50c-1 7-37 7-38 0z" fill="url(#tr)"/><ellipse cx="28" cy="9" rx="22" ry="6" fill="#8a8f98"/><path d="M14 10l4-8 5 8M26 10l4-9 4 9M36 10l4-7 3 7" fill="#f4f4f4"/></svg></div>
</div>

<section class="dialog">
  <div class="d-side">
    <h4 class="first">よく使う項目</h4>
    <div class="d-item"><svg viewBox="0 0 30 30"><circle cx="15" cy="15" r="12"/><path d="M15 8v8H9"/></svg><span class="jp">最近の項目</span></div>
    <div class="d-item"><svg viewBox="0 0 30 30"><path d="M12 3l12 22M17 3L6 25M3 20h24M6 25l-2 3M24 25l2 3"/></svg><span class="jp">アプリケ…</span></div>
    <div class="d-item"><svg viewBox="0 0 30 30"><rect x="1" y="4" width="28" height="23" rx="2"/><path d="M1 9h28"/><rect x="6" y="19" width="18" height="4" fill="currentColor"/></svg><span class="jp">デスクト…</span></div>
    <div class="d-item"><svg viewBox="0 0 30 30"><circle cx="15" cy="15" r="12"/><path d="M15 8v13M10 16l5 5 5-5"/></svg><span class="jp">ダウンロ…</span></div>
    <div class="d-item sel"><svg viewBox="0 0 30 30"><path d="M2 15L15 3l13 12M6 12v15h18V12M22 5v5"/><rect x="12" y="18" width="6" height="9" fill="currentColor"/></svg><span>tama</span></div>
    <div class="d-item"><svg viewBox="0 0 30 30"><path d="M2 6a2 2 0 0 1 2-2h6l3 3h13a2 2 0 0 1 2 2v16a2 2 0 0 1-2 2H4a2 2 0 0 1-2-2zM2 11h26"/></svg><span>Creative...</span></div>
    <h4>iCloud</h4>
    <div class="d-item teal"><svg viewBox="0 0 30 30"><path d="M8 25a6 6 0 0 1-1-12c1-6 6-9 11-7 3 1 4 3 5 6a6 6 0 0 1 0 13z"/></svg><span>iCloud Dri...</span></div>
    <div class="d-item teal"><svg viewBox="0 0 30 30"><path d="M6 3h12l6 7v17H6zM18 3v7h6"/></svg><span class="jp">書類</span></div>
    <div class="d-item teal"><svg viewBox="0 0 30 30"><rect x="1" y="4" width="28" height="23" rx="2"/><path d="M1 9h28"/><rect x="6" y="19" width="18" height="4" fill="currentColor"/></svg><span class="jp">デスクト…</span></div>
    <div class="d-item teal"><svg viewBox="0 0 30 30"><path d="M20 7h-8L9 4H3a1 1 0 0 0-1 1v20a2 2 0 0 0 2 2h20a2 2 0 0 0 2-2V16M2 11h14"/><circle cx="25" cy="7" r="5" fill="currentColor"/></svg><span class="jp">共有</span></div>
    <h4>場所</h4>
    <div class="d-item grey"><svg viewBox="0 0 30 30"><path d="M7 6h16l5 11v7a3 3 0 0 1-3 3H5a3 3 0 0 1-3-3v-7zM2 17h26M15 22h8"/></svg><span>Macintos...</span></div>
    <div class="d-item grey"><svg viewBox="0 0 30 30"><path d="M7 6h16l5 11v7a3 3 0 0 1-3 3H5a3 3 0 0 1-3-3v-7zM2 17h26"/><circle cx="24" cy="22" r="1" fill="currentColor"/></svg><span>Postgr...</span><svg class="eject" viewBox="0 0 20 20"><path d="M10 1L19 11H1z" fill="#999" stroke="none"/><rect x="1" y="14" width="18" height="5" rx="1" fill="#999" stroke="none"/></svg></div>
    <div class="d-item grey"><svg viewBox="0 0 30 30"><path d="M7 6h16l5 11v7a3 3 0 0 1-3 3H5a3 3 0 0 1-3-3v-7zM2 17h26"/><circle cx="24" cy="22" r="1" fill="currentColor"/></svg><span>Postgr...</span><svg class="eject" viewBox="0 0 20 20"><path d="M10 1L19 11H1z" fill="#999" stroke="none"/><rect x="1" y="14" width="18" height="5" rx="1" fill="#999" stroke="none"/></svg></div>
  </div>
  <div class="d-main">
    <div class="d-tool">
      <div class="pbtn nav"><svg viewBox="0 0 20 32"><path d="M15 3L4 16l11 13" fill="none" stroke="#222" stroke-width="2"/></svg></div>
      <div class="pbtn nav nav2"><svg viewBox="0 0 20 32"><path d="M5 3l11 13L5 29" fill="none" stroke="#b8b8b8" stroke-width="2"/></svg></div>
      <div class="pbtn view"><svg class="vi" viewBox="0 0 30 24"><rect x="1" y="1" width="28" height="22" rx="3" fill="none" stroke="#222" stroke-width="2"/><path d="M10.500 1v22M19.500 1v22" stroke="#222" stroke-width="2"/></svg><svg class="vc" viewBox="0 0 16 12"><path d="M2 2l6 7 6-7" fill="none" stroke="#222" stroke-width="2.500"/></svg></div>
      <div class="pbtn grp"><svg class="vg" viewBox="0 0 30 28"><path d="M1 1h28M1 14h28" stroke="#222" stroke-width="1.500"/><g fill="none" stroke="#222" stroke-width="1.500"><rect x="1" y="5" width="7" height="6" rx="1.500"/><rect x="11.500" y="5" width="7" height="6" rx="1.500"/><rect x="22" y="5" width="7" height="6" rx="1.500"/><rect x="1" y="19" width="7" height="7" rx="1.500"/><rect x="11.500" y="19" width="7" height="7" rx="1.500"/><rect x="22" y="19" width="7" height="7" rx="1.500"/></g></svg><svg class="vc" viewBox="0 0 16 12"><path d="M2 2l6 7 6-7" fill="none" stroke="#222" stroke-width="2.500"/></svg></div>
      <div class="pbtn path"><svg class="fi" viewBox="0 0 30 28"><use href="#folder"/></svg><span>grow-frontend-beginner</span><i class="stepper"><svg viewBox="0 0 32 32"><path d="M10 11l6-6 6 6M10 21l6 6 6-6" fill="none" stroke="#fff" stroke-width="2.500"/></svg></i></div>
      <div class="pbtn search"><svg viewBox="0 0 28 28"><circle cx="12" cy="12" r="10" fill="none" stroke="#222" stroke-width="2"/><path d="M19 19l8 8" stroke="#222" stroke-width="2.400"/></svg><span>検索</span></div>
    </div>
    <div class="cols">
      <div class="col">
        <div class="row"><svg class="fi" viewBox="0 0 30 28"><use href="#folder"/><circle cx="15" cy="17" r="6" fill="none" stroke="#4a94d8" stroke-width="1.500"/><circle cx="15" cy="17" r="2.500" fill="none" stroke="#4a94d8" stroke-width="1.200"/></svg><span>Creative Cloud Files</span><svg class="ch"><use href="#chev"/></svg></div>
        <div class="row"><svg class="fi" viewBox="0 0 30 28"><use href="#folder"/></svg><span>grow-curriculum</span><svg class="ch"><use href="#chev"/></svg></div>
        <div class="row"><svg class="fi" viewBox="0 0 30 28"><use href="#folder"/></svg><span>grow-curriculum-backend</span><svg class="ch"><use href="#chev"/></svg></div>
        <div class="row on"><svg class="fi" viewBox="0 0 30 28"><use href="#folder"/></svg><span>grow-frontend-beginner</span><svg class="ch"><use href="#chev"/></svg></div>
        <div class="row"><svg class="fi" viewBox="0 0 30 28"><use href="#folder"/></svg><span>grow-frontend-coding</span><svg class="ch"><use href="#chev"/></svg></div>
        <div class="row"><svg class="fi" viewBox="0 0 30 28"><use href="#folder"/></svg><span>grow-frontend-dev</span><svg class="ch"><use href="#chev"/></svg></div>
        <div class="row"><svg class="fi" viewBox="0 0 30 28"><use href="#folder"/></svg><span>grow-frontend-intermediate</span><svg class="ch"><use href="#chev"/></svg></div>
        <div class="row"><svg class="fi" viewBox="0 0 30 28"><use href="#folder"/></svg><span>grow-javascript</span><svg class="ch"><use href="#chev"/></svg></div>
        <div class="row"><svg class="fi" viewBox="0 0 30 28"><use href="#folder"/></svg><span>grow-lesson</span><svg class="ch"><use href="#chev"/></svg></div>
        <div class="row"><svg class="fi" viewBox="0 0 30 28"><use href="#folder"/></svg><span>grow-test-1</span><svg class="ch"><use href="#chev"/></svg></div>
        <div class="row dis"><svg class="fi" viewBox="0 0 30 30"><path d="M4 1h17l6 6v22H4z" fill="#fff" stroke="#e2e2e2"/><rect x="0" y="8" width="15" height="14" rx="1" fill="#9fb4e2"/><path d="M3 11l2 8 2.500-6 2.500 6 2-8" fill="none" stroke="#fff" stroke-width="1.200"/><path d="M17 12h7M17 15h7M17 18h7" stroke="#c5d0ea"/></svg><span>HTML CSSについて 1</span></div>
        <div class="row"><svg class="fi" viewBox="0 0 30 28"><use href="#folder"/></svg><span>HTML_CSS</span><svg class="ch"><use href="#chev"/></svg></div>
        <div class="row"><svg class="fi" viewBox="0 0 30 28"><use href="#folder"/></svg><span>javascript-project</span><svg class="ch"><use href="#chev"/></svg></div>
        <div class="row"><svg class="fi" viewBox="0 0 30 28"><use href="#folder"/></svg><span>jQuery_curriculum answer</span><svg class="ch"><use href="#chev"/></svg></div>
        <div class="row"><svg class="fi" viewBox="0 0 30 28"><use href="#folder"/></svg><span>nextis-projects</span><svg class="ch"><use href="#chev"/></svg></div>
      </div>
      <div class="col">
        <div class="row"><svg class="fi" viewBox="0 0 30 28"><use href="#folder"/></svg><span>answer</span><svg class="ch"><use href="#chev"/></svg></div>
        <div class="row"><svg class="fi" viewBox="0 0 30 28"><use href="#folder"/></svg><span>tools</span><svg class="ch"><use href="#chev"/></svg></div>
        <div class="row"><svg class="fi" viewBox="0 0 30 28"><use href="#folder"/></svg><span>work</span><svg class="ch"><use href="#chev"/></svg></div>
      </div>
      <div class="col last"></div>
    </div>
    <div class="d-foot">
      <div class="pbtn fbtn newf">新規フォルダ</div>
      <div class="pbtn fbtn cancel">キャンセル</div>
      <div class="fbtn open">開く</div>
    </div>
  </div>
</section>
</body>
</html>
```

FILE: styles.css
```css
* { box-sizing: border-box; }
html, body { margin: 0; padding: 0; }
body {
  width: 2880px; height: 1800px; overflow: hidden; position: relative;
  font-family: "Inter", "Noto Sans CJK JP", sans-serif;
  color: #a9a9a9;
  background: linear-gradient(100deg, #061226 0%, #0a1426 33%, #2a0a20 42%, #3c0c26 60%, #4c1420 72%, #7a2a16 90%, #8c3014 100%);
}
.sprite { position: absolute; }
i { font-style: normal; }

/* menubar */
.menubar {
  height: 48px; display: flex; align-items: center; color: #fff;
  background: linear-gradient(90deg, #563f38 0%, #7d4a30 18%, #9a4a22 40%, #984822 55%, #86402a 75%, #54303a 100%);
  text-shadow: 0 1px 3px rgba(0,0,0,.35);
}
.apple { width: 28px; height: 28px; margin-left: 39px; margin-top: -3px; flex: none; }
.menus { display: flex; gap: 42px; margin-left: 38px; font-size: 24px; font-family: "Noto Sans CJK JP", sans-serif; line-height: 48px; }
.appname { font: 700 26px "Inter", sans-serif; line-height: 48px; }
.tray { margin-left: auto; display: flex; align-items: center; position: relative; height: 48px; }
.t { flex: none; display: block; }
.t1 { width: 42px; height: 36px; margin-right: 40px; }
.t2 { width: 36px; height: 36px; margin-right: 38px; }
.t3 { width: 36px; height: 36px; margin-right: 40px; }
.t4 { width: 44px; height: 34px; margin-right: 37px; }
.t5 { width: 52px; height: 36px; margin-right: 39px; }
.t6 { width: 34px; height: 34px; margin-right: 34px; }
.t7 { width: 34px; height: 34px; margin-right: 32px; }
.t8 { width: 34px; height: 34px; margin-right: 29px; }
.siri { width: 30px; height: 30px; border-radius: 50%; margin-right: 32px; background: conic-gradient(#3a9ad8, #8a4fc8, #e0408a, #4a2a60, #3ac0a0, #3a9ad8); }
.clock { font: 400 27px "Inter", "Noto Sans CJK JP", sans-serif; margin-right: 37px; letter-spacing: .6px; white-space: nowrap; }
.lineword { font: 700 9px "Inter", sans-serif; text-anchor: middle; fill: #6a3a2c; text-shadow: none; }

/* window */
.window {
  margin-top: 2px; height: 1648px; display: flex; flex-direction: column;
  background: #6f6f6f; border-radius: 20px; overflow: hidden;
  border-top: 2px solid #8a8a8a;
}
.titlebar { height: 80px; flex: none; display: flex; align-items: center; background: #717171; border-bottom: 3px solid #777; position: relative; }
.lights { display: flex; gap: 18px; margin-left: 30px; width: 104px; flex: none; margin-top: 7px; }
.l { width: 23px; height: 23px; border-radius: 50%; display: block; flex: none; }
.off { background: #7b7b7b; }
.yel { background: #f6c04f; }
.grn { background: #62c554; }
.arrows { display: flex; gap: 30px; margin-left: 698px; flex: none; margin-top: 3px; }
.arrows svg { width: 32px; height: 32px; display: block; }
.cmd { margin-left: 35px; width: 1096px; height: 56px; flex: none; border: 3px solid #7b7b7b; background: #747474; border-radius: 12px; display: flex; align-items: center; justify-content: center; gap: 12px; color: #a9a9a9; font-size: 28px; padding-left: 8px; font-family: "Noto Sans CJK JP", sans-serif; }
.cmd svg { width: 34px; height: 34px; }
.layouts { margin-left: auto; display: flex; gap: 28px; margin-right: 34px; }
.layouts svg { width: 34px; height: 34px; display: block; }

.main { flex: 1; display: flex; min-height: 0; }

/* activity bar */
.activity { width: 114px; flex: none; border-right: 2px solid #757575; display: flex; flex-direction: column; padding-top: 2px; padding-bottom: 3px; }
.act { height: 115px; flex: none; position: relative; display: flex; align-items: center; justify-content: center; }
.act-on::before { content: ""; position: absolute; left: 0; top: 0; width: 4px; height: 114px; background: #7a96bb; }
.act-bottom { margin-top: auto; }
.ai, .af { width: 70px; height: 70px; display: block; }
.ai { fill: none; stroke: #9a9a9a; stroke-width: 3.200; }
.af { fill: #9a9a9a; }
.badge { position: absolute; left: 58px; top: 63px; width: 37px; height: 33px; border-radius: 50%; background: #7a96bb; color: #e2e6ec; font: 700 18px/33px "Inter", sans-serif; text-align: center; }

/* sidebar */
.side { width: 588px; flex: none; display: flex; flex-direction: column; border-right: 2px solid #757575; overflow: hidden; background: #6f6f6f; }
.side-head { height: 84px; flex: none; display: flex; align-items: center; justify-content: space-between; padding: 0 40px 0 49px; font: 400 26px "Noto Sans CJK JP", sans-serif; color: #a9a9a9; }
.dots { display: flex; gap: 6px; }
.dots i { width: 5px; height: 5px; border-radius: 50%; background: #c4c4c4; display: block; }
.pane-head { height: 56px; flex: none; margin-top: -3px; display: flex; align-items: center; font: 700 26px "Noto Sans CJK JP", sans-serif; color: #acacac; padding-left: 14px; white-space: nowrap; letter-spacing: .1px; }
.tw { width: 24px; height: 24px; fill: none; stroke: #a4a4a4; stroke-width: 2; flex: none; margin-right: 12px; }
.side-body { flex: 1; padding: 31px 0 0 50px; font: 400 30px/43.500px "Noto Sans CJK JP", "Inter", sans-serif; color: #a9a9a9; letter-spacing: .7px; white-space: nowrap; }
.side-body p { margin: 0 0 0 -1px; }
.side-body a { color: #7e9fca; }
.gap2 { padding-top: 32px; }
.gap3 { padding-top: 4px; font-family: "Inter", "Noto Sans CJK JP", sans-serif; }
.vbtn { display: block; width: 490px; height: 66px; margin: 33px 0 29px; border: 0; border-radius: 3px; background: #7a96bb; color: #b2c2d8; font: 400 30px "Noto Sans CJK JP", sans-serif; letter-spacing: .5px; padding: 0; }
.pane-foot { height: 53px; flex: none; display: flex; align-items: center; border-top: 2px solid #767676; font: 700 26px "Noto Sans CJK JP", sans-serif; color: #acacac; padding: 0 0 6px 14px; }

/* editor */
.editor { flex: 1; min-width: 0; display: flex; flex-direction: column; background: linear-gradient(100deg, #6f6f6f, #727272 60%, #6f6f6f); }
.tabs { height: 84px; flex: none; display: flex; }
.tab { width: 288px; flex: none; display: flex; align-items: center; border-top: 3px solid #7a96bb; border-right: 2px solid #767676; padding-left: 24px; padding-bottom: 3px; }
.tabicon { width: 40px; height: 40px; flex: none; }
.tabname { margin-left: 16px; font: italic 400 30px "Noto Sans CJK JP", sans-serif; color: #bdbdbd; width: 122px; white-space: nowrap; }
.tabx { width: 20px; height: 20px; margin-left: 42px; }
.tabfill { flex: 1; display: flex; align-items: center; justify-content: flex-end; gap: 33px; padding: 3px 40px 0 0; border-bottom: 3px solid #767676; }
.tabfill svg { width: 34px; height: 34px; }
.welcome { display: flex; flex: none; }
.welcome h2 { margin: 0; font: 400 46px/60px "Noto Sans CJK JP", sans-serif; color: #a9a9a9; }
.wleft { width: 1158px; padding: 114px 0 0 198px; flex: none; }
.wright { width: 786px; padding-top: 114px; flex: none; }
.card { background: linear-gradient(100deg, #757575, #787878); border-radius: 14px; overflow: hidden; }
.c1 { margin-top: 41px; height: 171px; padding-top: 64px; }
.rline { text-align: right; white-space: nowrap; font: 400 30px/37px "Inter", "Noto Sans CJK JP", sans-serif; color: #a9a9a9; display: flex; justify-content: flex-end; }
.r62 { padding-right: 62px; letter-spacing: .25px; }
.r21 { padding-right: 21px; }
.r394 { padding-right: 394px; }
.r98 { padding-right: 98px; }
.r392 { padding-right: 392px; }
.c2 { margin-top: 197px; height: 205px; display: flex; flex-direction: column; }
.c2body { flex: 1; padding-top: 20px; }
.ctitle { font-size: 34px; line-height: 44px; }
.c2 .rline { line-height: 54px; }
.c2 .ctitle { line-height: 44px; margin-bottom: 10px; }
.prog { height: 10px; flex: none; background: #7b7b7b; }
.progv { height: 10px; background: #6e8fb8; }
.c3 { margin-top: 39px; height: 91px; display: flex; flex-direction: column; }
.c4 { margin-top: 39px; height: 84px; }
.c5 { margin-top: 39px; height: 89px; display: flex; flex-direction: column; }
.c5body { flex: 1; display: flex; align-items: center; padding-left: 4px; }
.dk { width: 68px; margin-right: 11px; flex: none; display: flex; flex-direction: column; align-items: center; color: #7a96bb; font: 400 16px/18px "Inter", sans-serif; }
.dk svg { width: 44px; height: 26px; }
.dtitle { font: 600 33px "Inter", sans-serif; color: #acacac; white-space: nowrap; width: 451px; }
.upd { width: 72px; height: 49px; background: #7a96bb; border-radius: 8px; text-align: center; color: #ced8e5; font: 400 26px/49px "Noto Sans CJK JP", sans-serif; }
.showstart { margin-top: auto; margin-bottom: 39px; display: flex; align-items: center; justify-content: center; gap: 24px; font: 400 31px "Noto Sans CJK JP", sans-serif; color: #a9a9a9; height: 42px; }
.cb { width: 42px; height: 42px; background: #7c7c7c; border-radius: 5px; display: flex; align-items: center; justify-content: center; }
.cb svg { width: 28px; height: 28px; }

/* status */
.status { height: 52px; flex: none; display: flex; align-items: center; background: #6f6f6f; border-top: 2px solid #767676; font: 400 28px "Inter", sans-serif; color: #a9a9a9; }
.remote { width: 82px; height: 50px; background: #7a96bb; display: flex; align-items: center; justify-content: center; flex: none; padding-left: 14px; }
.remote svg { width: 28px; height: 36px; }
.st-left { display: flex; align-items: center; margin-left: 19px; }
.st-left svg { width: 32px; height: 32px; flex: none; }
.st-left span { margin-left: 9px; }
.s-warn { margin-left: 9px; }
.s-radio { margin-left: 42px; }
.st-right { margin-left: auto; display: flex; align-items: center; margin-right: 38px; }
.st-right svg { flex: none; width: 32px; height: 34px; }
.golive { margin-left: 8px; margin-right: 38px; font-size: 28px; white-space: nowrap; }
.s-bell { margin-left: 41px; }

/* dock */
.dock {
  margin: 6px 0 0 50px; width: 2779px; height: 85px; display: flex; padding-left: 4px;
  border: 2px solid rgba(255,255,255,.22); border-radius: 24px;
  background: linear-gradient(90deg, #5e6478 0%, #656577 20%, #985f70 32%, #a05f6a 50%, #955c70 58%, #9a5e6a 68%, #b06058 85%, #c46352 100%);
}
.slot { width: 67.700px; flex: none; height: 81px; position: relative; }
.ic { position: absolute; left: 6px; top: 10px; width: 56px; height: 56px; display: block; }
.ic.tall { height: 60px; top: 8px; }
.ic.xtall { width: 60px; height: 66px; left: 4px; top: 4px; }
.run::after { content: ""; position: absolute; left: 30px; bottom: 1px; width: 7px; height: 8px; border-radius: 50%; background: #0e0a0e; }
.dsep { width: 31px; flex: none; display: flex; justify-content: center; padding-top: 10px; }
.dsep i { width: 2px; height: 62px; background: #6a2c44; display: block; }
.dot-badge { position: absolute; left: 38px; top: 44px; width: 26px; height: 26px; border-radius: 50%; background: #fff; border: 3px solid #4a8ff0; color: #333; font: 400 14px/20px "Inter", sans-serif; text-align: center; }
.red-badge { position: absolute; left: 38px; top: 5px; width: 24px; height: 24px; border-radius: 50%; background: #e64b3c; color: #fff; font: 400 15px/24px "Inter", sans-serif; text-align: center; }
.tile { font: 700 15px "Inter", sans-serif; fill: #fff; text-anchor: middle; }
.linegreen { font: 700 11px "Inter", sans-serif; fill: #58c32e; text-anchor: middle; }
.pstext { font: 700 26px "Inter", sans-serif; fill: #4fa8f0; text-anchor: middle; }

.stk { overflow: visible; }
.thumb { position: absolute; left: 3px; width: 61px; background: #fff; padding: 2px 3px; display: flex; flex-direction: column; gap: 4px; top: 22px; height: 34px; }
.mini { position: absolute; right: -1px; bottom: -14px; width: 24px; height: 24px; }
.ln { display: block; height: 2px; background: #b9c8d8; width: 80%; }
.ln.s { width: 55%; }
.ln.red { background: #e0a0a0; }
.bar-dk, .bar-bl, .bar-or, .bar-pu { display: block; margin: -2px -3px 0; height: 4px; }
.bar-dk { background: #333; }
.bar-bl { background: #4a8fd8; }
.bar-or { background: #c9573a; }
.bar-pu { background: #6b3fa0; }
.th-doc { top: 8px; height: 50px; width: 58px; padding: 0; background: none; gap: 0; left: 5px; }
.doc-top { display: block; width: 24px; height: 16px; margin-left: 12px; background: #f0f0f0; clip-path: polygon(0 0, 70% 0, 100% 60%, 100% 100%, 0 100%); }
.doc-body { flex: 1; background: #f4f4f4; display: flex; padding: 2px; gap: 3px; }
.dc1 { width: 24px; background: linear-gradient(#1a3350 0 30%, #3a7a6a 30% 55%, #c9683a 55% 100%); display: block; }
.dc2 { flex: 1; background: repeating-linear-gradient(#ccc 0 1px, #fff 1px 5px); display: block; }
.th-b { top: 12px; height: 54px; width: 60px; left: 4px; }
.th-p { background: #eef3f5; }
.th-p.blue { background: #d5e8ee; }
.spot { display: block; width: 16px; height: 14px; margin: 4px auto 0; background: #d3563a; }
.th-w { top: 19px; height: 38px; }
.th-g { top: 9px; height: 60px; width: 54px; left: 8px; background: #6b3fa0; align-items: center; padding-top: 14px; color: #fff; font: 400 10px "Inter", sans-serif; }
.srch { display: block; width: 40px; height: 4px; background: #ddd; border-radius: 2px; }
.th-d { top: 16px; height: 46px; background: #1e1e1e; }
.th-d .ln { background: #4a5a6a; }

/* dialog */
.dialog {
  position: absolute; left: 640px; top: 424px; width: 1600px; height: 900px; display: flex;
  background: #fff; border-radius: 20px; overflow: hidden;
  font-family: "Inter", "Noto Sans CJK JP", sans-serif; color: #2a2a2a;
  box-shadow: 0 0 0 1px rgba(0,0,0,.25), 0 24px 70px rgba(0,0,0,.38);
}
.d-side { width: 258px; flex: none; background: #dedbd8; padding-top: 29px; overflow: hidden; }
.d-side h4 { margin: 28px 0 0 34px; height: 36px; font: 700 20px/36px "Noto Sans CJK JP", "Inter", sans-serif; color: #a19d9a; }
.d-side h4.first { margin-top: 0; }
.d-item { height: 56px; margin: 0 22px 0 20px; display: flex; align-items: center; padding-left: 16px; gap: 15px; color: #1f75ea; border-radius: 10px; }
.d-item > svg:first-child { width: 30px; height: 30px; flex: none; fill: none; stroke: currentColor; stroke-width: 2; }
.d-item span { color: #3c3a38; font: 400 24px "Inter", "Noto Sans CJK JP", sans-serif; white-space: nowrap; flex: none; }
.d-item span.jp { font-family: "Noto Sans CJK JP", sans-serif; padding-bottom: 3px; }
.d-item.sel { background: #c6c1be; }
.d-item.teal { color: #2ba3b8; }
.d-item.grey { color: #7a7876; }
.eject { width: 20px; height: 20px; margin-left: auto; margin-right: 24px; flex: none; }
.d-main { flex: 1; min-width: 0; display: flex; flex-direction: column; }
.d-tool { height: 125px; flex: none; display: flex; align-items: center; padding-left: 40px; border-bottom: 3px solid #e6e6e6; }
.pbtn { background: #fff; border-radius: 10px; box-shadow: 0 0 0 1px rgba(0,0,0,.06), 0 2px 2px rgba(0,0,0,.22); display: flex; align-items: center; flex: none; height: 40px; }
.nav { width: 46px; justify-content: center; }
.nav svg { width: 20px; height: 32px; }
.nav2 { margin-left: 2px; }
.view { width: 92px; margin-left: 16px; padding-left: 19px; }
.vi { width: 30px; height: 24px; }
.vc { width: 16px; height: 12px; margin-left: 9px; }
.grp { width: 90px; margin-left: 16px; padding-left: 18px; }
.vg { width: 30px; height: 28px; }
.vg + .vc { margin-left: 11px; }
.path { width: 414px; margin-left: 116px; padding-left: 18px; font-size: 25.500px; }
.path .fi { width: 28px; height: 26px; flex: none; }
.path span { margin-left: 10px; white-space: nowrap; }
.stepper { margin-left: auto; margin-right: 4px; width: 32px; height: 32px; border-radius: 8px; background: linear-gradient(#4a90f8, #2f74ec); display: block; flex: none; }
.stepper svg { width: 32px; height: 32px; display: block; }
.search { width: 303px; margin-left: 119px; padding-left: 13px; font: 400 24px "Noto Sans CJK JP", sans-serif; color: #bdbdbd; }
.search svg { width: 28px; height: 28px; flex: none; }
.search span { margin-left: 12px; }
.cols { flex: 1; min-height: 0; display: flex; }
.col { width: 490px; flex: none; border-right: 2px solid #e6e6e6; padding-top: 13px; overflow: hidden; }
.col.last { flex: 1; border-right: 0; }
.row { height: 44px; margin: 0 21px 0 20px; border-radius: 10px; display: flex; align-items: center; padding: 0 13px 3px 13px; font-size: 25.500px; color: #2b2b2b; white-space: nowrap; }
.row .fi { width: 30px; height: 28px; flex: none; margin-right: 12px; overflow: visible; }
.row .ch { width: 10px; height: 18px; margin-left: auto; color: #8d8d8d; flex: none; }
.row.on { background: #2c63db; color: #fff; }
.row.on .ch { color: #fff; }
.row.dis { color: #c4c4c4; }
.d-foot { height: 121px; flex: none; display: flex; align-items: center; padding: 0 40px 3px 40px; border-top: 3px solid #e6e6e6; }
.fbtn { height: 41px; font: 400 24px/38px "Noto Sans CJK JP", sans-serif; justify-content: center; display: flex; align-items: center; padding-bottom: 3px; }
.newf { width: 185px; color: #2a2a2a; }
.cancel { width: 178px; margin-left: auto; color: #2a2a2a; }
.open { width: 178px; margin-left: 16px; color: #fff; border-radius: 10px; background: linear-gradient(#4a90f8, #3376ef); }
```
